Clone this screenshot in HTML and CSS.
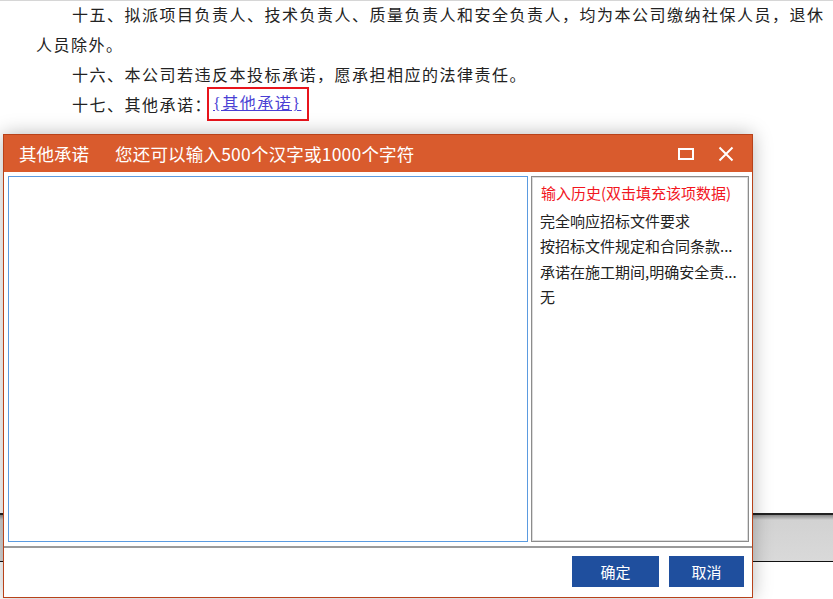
FILE: index.html
```html
<!DOCTYPE html>
<html lang="zh-CN">
<head>
<meta charset="utf-8">
<title>其他承诺</title>
<link rel="stylesheet" href="styles.css">
</head>
<body>
<div class="page">
  <div class="doc">
    <p class="para">十五、拟派项目负责人、技术负责人、质量负责人和安全负责人，均为本公司缴纳社保人员，退休人员除外。</p>
    <p class="para">十六、本公司若违反本投标承诺，愿承担相应的法律责任。</p>
    <p class="para">十七、其他承诺：<span class="field"><a class="field-link">{其他承诺}</a></span></p>
  </div>
  <div class="statusbar"></div>
</div>

<div class="dialog">
  <div class="dialog-title">
    <span class="title-name">其他承诺</span>
    <span class="title-hint">您还可以输入500个汉字或1000个字符</span>
    <span class="title-tools">
      <svg class="icon" width="16" height="12" viewBox="0 0 16 12"><rect x="1" y="1" width="14" height="10" fill="none" stroke="#fff" stroke-width="2"/></svg>
      <svg class="icon" width="16" height="16" viewBox="0 0 16 16"><path d="M1.5 1.5 L14.5 14.5 M14.5 1.5 L1.5 14.5" stroke="#fff" stroke-width="2" fill="none"/></svg>
    </span>
  </div>
  <div class="dialog-body">
    <div class="editor"></div>
    <div class="history">
      <div class="history-head">输入历史(双击填充该项数据)</div>
      <div class="history-item">完全响应招标文件要求</div>
      <div class="history-item">按招标文件规定和合同条款...</div>
      <div class="history-item">承诺在施工期间,明确安全责...</div>
      <div class="history-item">无</div>
    </div>
  </div>
  <div class="dialog-footer">
    <button class="btn btn-ok">确定</button>
    <button class="btn btn-cancel">取消</button>
  </div>
</div>
</body>
</html>
```

FILE: styles.css
```css
html, body {
  margin: 0;
  padding: 0;
  background: #fff;
}

.page {
  width: 833px;
  height: 599px;
  overflow: hidden;
  border-top: 1px solid #d6d6d6;
  box-sizing: border-box;
}

.doc {
  height: 512px;
  padding-left: 36px;
  padding-right: 4px;
  font-family: "Liberation Serif", "Noto Sans CJK SC", serif;
  font-size: 16px;
  letter-spacing: 1.5px;
  line-height: 30px;
  color: #222;
  box-sizing: border-box;
}

.para {
  margin: 0;
  text-indent: 36px;
}

.field {
  display: inline-block;
  border: 2px solid #e8141c;
  padding: 0 6px 0 4px;
  line-height: 30px;
  text-indent: 0;
  margin-left: -5px;
  vertical-align: middle;
  margin-top: -6px;
}

.field-link {
  color: #4a3fd4;
  text-decoration: underline;
  letter-spacing: 1.5px;
}

.statusbar {
  height: 46px;
  border-top: 2px solid #222;
  border-bottom: 1px solid #111;
  background: linear-gradient(#8a8a8a 0, #d2d2d2 5px, #d9d9d9 100%);
}

.dialog {
  position: absolute;
  left: 3px;
  top: 134px;
  width: 750px;
  height: 464px;
  box-sizing: border-box;
  border: 1px solid #b8421a;
  background: #fff;
  box-shadow: 0 0 18px rgba(0, 0, 0, 0.28);
  display: flex;
  flex-direction: column;
  font-family: "Noto Sans CJK SC", "Noto Sans", sans-serif;
}

.dialog-title {
  height: 37px;
  background: #d95b2d;
  color: #fff;
  display: flex;
  align-items: center;
  padding-left: 15px;
  padding-right: 18px;
  font-size: 17.5px;
  flex: none;
}

.title-name {
  width: 96px;
}

.title-hint {
  flex: 1;
  letter-spacing: 0.2px;
}

.title-tools {
  display: flex;
  align-items: center;
  gap: 24px;
  margin-top: 1px;
}

.icon {
  display: block;
}

.dialog-body {
  flex: 1;
  display: flex;
  gap: 3px;
  padding: 4px 3px 4px 4px;
  min-height: 0;
}

.editor {
  width: 520px;
  box-sizing: border-box;
  border: 1px solid #5b9be0;
}

.history {
  flex: 1;
  box-sizing: border-box;
  border: 1px solid #8c8c8c;
  box-shadow: inset 0 0 0 1px #dcdcdc;
  padding: 4px 8px;
  font-size: 15px;
  color: #222;
}

.history-head {
  color: #f2161e;
  line-height: 24px;
  margin-bottom: 3px;
  margin-left: 1px;
}

.history-item {
  line-height: 25.3px;
}

.dialog-footer {
  flex: none;
  border-top: 2px solid #9a9a9a;
  display: flex;
  justify-content: flex-end;
  align-items: flex-start;
  padding: 8px 8px 0 0;
  gap: 10px;
  box-sizing: border-box;
  height: 51px;
}

.btn {
  height: 31px;
  border: none;
  background: #1f4f9e;
  color: #fff;
  font-family: "Noto Sans CJK SC", sans-serif;
  font-size: 15px;
  padding: 0;
}

.btn-ok {
  width: 87px;
}

.btn-cancel {
  width: 75px;
}
```
